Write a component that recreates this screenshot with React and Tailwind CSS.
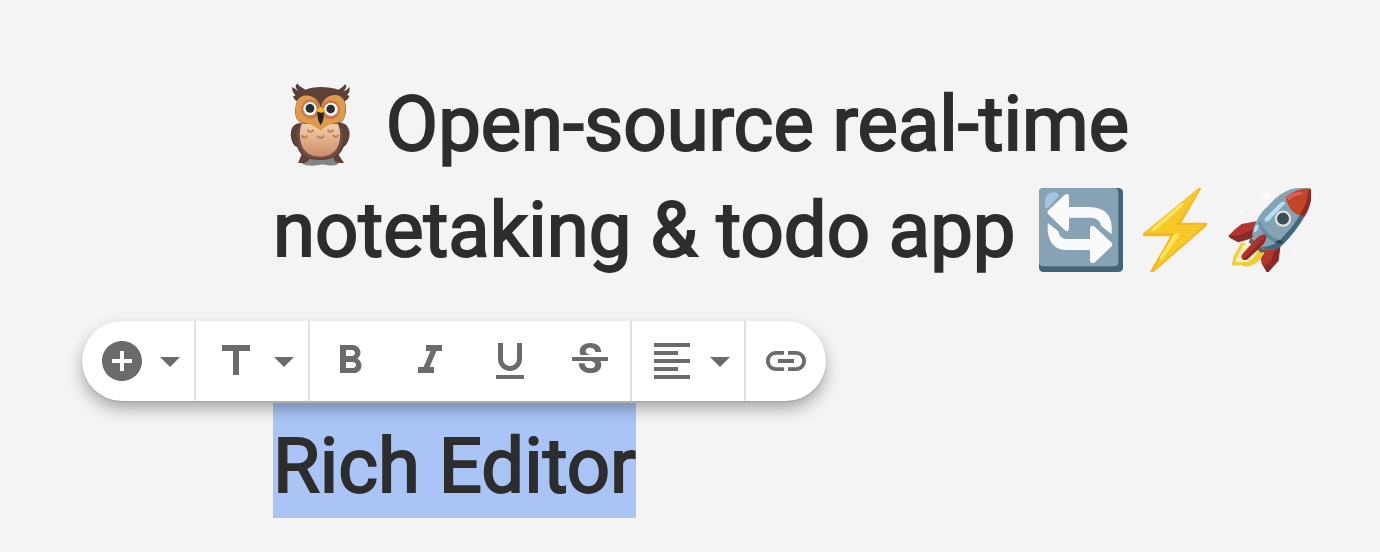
import {
  MdAddCircle,
  MdArrowDropDown,
  MdTitle,
  MdFormatBold,
  MdFormatItalic,
  MdFormatUnderlined,
  MdStrikethroughS,
  MdFormatAlignLeft,
  MdLink,
} from "react-icons/md";

function Emoji({ label, viewBox, children }) {
  return (
    <svg
      role="img"
      aria-label={label}
      viewBox={viewBox}
      className="mx-[5px] inline-block size-[84px] align-[-16px]"
    >
      {children}
    </svg>
  );
}

function Owl() {
  return (
    <Emoji label="Owl" viewBox="24 36 252 252">
      <defs>
        <linearGradient id="owl-belly" x1="0" y1="0" x2="0" y2="1">
          <stop offset="0.15" stopColor="#ebcba5" />
          <stop offset="1" stopColor="#ce8b68" />
        </linearGradient>
      </defs>
      <path d="M96 281q4-20 28-24h58q22 4 24 24-14 8-32 5-12-4-24-2-34 8-54-3z" fill="#848484" />
      <path d="M98 246 84 279h20q14-6 18-20zM186 256l10 20q12 4 26 2l-24-34z" fill="#5d4037" />
      <path d="M84 160q-22 6-22 34 2 30 20 38 6 18 18 26 20 12 50 12t50-12q14-8 20-26 18-12 19-42-2-26-22-31z" fill="#5d4037" />
      <path d="M90 166q-10 12-9 32 1 26 9 40 10 18 24 24 36 8 74 0 14-6 22-24 9-16 9-40 0-22-11-32z" fill="#704d42" />
      <path d="M96 160q-8 18-6 44 6 56 62 56 54-2 58-58 2-24-8-44z" fill="url(#owl-belly)" />
      <path d="M83 40q-14 10 3 23-10-6-19-12-3 14 10 25l-8 3q4 12 12 14-10 30-2 52 8 14 24 16h98q16-2 22-18 10-20 1-50 12-4 14-16l-7-2q10-8 8-24-8 10-18 12 14-14 4-20-6 10-20 16-22-8-54-8-26 0-44 8-20-10-24-17z" fill="#5d4037" />
      <path d="M152 114C144 72 92 66 81 94c-7 24-5 46 1 55 8 12 24 7 36 13 14 6 24 12 34 20 10-10 20-16 34-21 12-4 28-1 35-13 7-14 8-38 1-56-12-28-62-22-70 22z" fill="#e09a4c" />
      <circle cx="122" cy="117" r="29" fill="#c77a4b" />
      <circle cx="181" cy="119" r="29" fill="#c77a4b" />
      <circle cx="120" cy="116" r="20" fill="#fafafa" />
      <circle cx="183" cy="118" r="20" fill="#fafafa" />
      <circle cx="120" cy="115" r="13" fill="#2b2f30" />
      <circle cx="182" cy="117" r="13" fill="#2b2f30" />
      <path d="M142 125q9-5 19 0 3 22-9 41-11-18-10-41z" fill="#252525" />
      <path d="M141 124q4-12 11-12 8 1 11 13-11 7-22-1z" fill="#fcb803" />
      <g fill="none" stroke="#c57b57" strokeWidth="6" strokeLinecap="round">
        <path d="M114 181q2 4 7 4 5 1 8-4M174 181q2 4 7 4 5 1 8-4M96 198q2 4 7 4 5 1 8-4M143 199q4 5 9 5 6 0 9-5M191 197q2 4 7 4 4 0 6-4" />
      </g>
    </Emoji>
  );
}

function Refresh() {
  return (
    <Emoji label="Sync" viewBox="27 39 252 252">
      <rect x="27" y="39" width="252" height="252" rx="13" fill="#436476" />
      <path d="M40 39h212q13 0 13 13v210q0 12-13 12H40q-13 0-13-12V52q0-13 13-13z" fill="#87a2b5" />
      <path d="M45 96V78q2-22 22-26 18-2 20 12-16 14-30 32-8 8-12 0z" fill="#a1c6da" />
      <g fill="#fafafa">
        <path d="M54 107 104 59q13-6 13 5v32h61q64 2 67 58v24l-32-26q-4-22-30-24h-66v35q-3 10-13 2L54 117q-4-5 0-10z" />
        <path d="M245 214 195 262q-13 6-15-4v-33h-76q-46-4-51-60v-22l32 26q2 20 22 23h73v-34q4-10 14-3l51 48q4 5 0 11z" />
      </g>
    </Emoji>
  );
}

function Bolt() {
  return (
    <Emoji label="High voltage" viewBox="9 39 252 252">
      <path d="M205 40q6-3 8 2l-59 101h73q8 2 3 9L70 292q-8 4-10-2l61-106H43q-7-3-3-9z" fill="#f9b517" />
      <path d="M204 43 137 146q2 3 8 3h80L72 284l61-107q-2-3-8-3H46z" fill="#f6c92a" />
      <path d="M67 159 153 85q8-4 8 2-1 4-6 9l-78 70q-8 4-11 0-2-4 1-7zM91 243l38-61q12-12 18-5 1 6-4 12l-43 60q-7 6-10 2-2-4 1-8z" fill="#fce45b" />
      <path d="M200 48 141 134q-6 9 0 12l10-8 61-95z" fill="#f7c329" />
    </Emoji>
  );
}

function Rocket() {
  return (
    <Emoji label="Rocket" viewBox="289 39 252 252">
      <path d="m407 48 4 9 10 1-7 7 2 10-9-5-9 5 2-10-7-7 10-1z" fill="#fff" />
      <g fill="#fff">
        <circle cx="330" cy="112" r="5" />
        <circle cx="376" cy="108" r="3" />
        <circle cx="521" cy="170" r="4" />
        <circle cx="492" cy="226" r="5" />
      </g>
      <path d="m382 138-49 9q-18 12-38 34-3 4 2 7l26 14q22-6 46-14z" fill="#b33430" />
      <path d="m297 187 24 14q24-6 44-14l8-24q-26 6-44 17-18 4-34 1z" fill="#8b2926" />
      <path d="m386 225 7 41 15 25q3 3 6 0l30-34 6-48-20-5z" fill="#b33430" />
      <path d="m449 212-7 44-29 34q-4 3-6-1l-8-17q20-8 24-18 3-20 18-38z" fill="#8b2926" />
      <path d="m332 202-23 42-6 26q10 4 26-1 10 8 28 5 32-10 44-42z" fill="#ecce3c" />
      <path d="m338 209-18 36-6 15 23 2q24 2 42-29l-24-24z" fill="#fbf0b2" />
      <path d="m360 188-6 14 39 33 14-12z" fill="#616161" />
      <path d="M541 42q6 46-21 87-26 44-64 80-22 18-48 15-16-1-29-16-18-16-13-37 10-48 49-81 32-36 65-47 36-9 61-1z" fill="#86a3b6" />
      <path d="m508 118 13 5q-25 45-65 86-22 18-48 15l-17-8q46-1 70-35 30-30 47-63z" fill="#456878" />
      <path d="M465 66q33-25 70-26l6 2q6 38-20 82-46-5-56-58z" fill="#c44525" />
      <path d="M533 48q3-3 8-6 5 44-20 82l-13-6q23-32 25-70z" fill="#8a2926" />
      <path d="M467 66q22-16 46-15 6 3-2 8-18 2-35 15-7 3-9-8z" fill="#dd615b" />
      <path d="M388 136q10 42 65 62l-8 9q-47-14-61-61z" fill="#668b9e" />
      <path d="m431 202 14-8 12 5-9 8z" fill="#2f4650" />
      <path d="m403 129 46-45q12-8 15 1l-49 52q-9 5-12 1-2-4 0-9zM370 162q6-18 14-10-3 13-9 19-7 3-5-9z" fill="#b3e1f4" />
      <circle cx="457" cy="131" r="21" fill="#35444d" stroke="#e2e2e2" strokeWidth="7" />
      <circle cx="457" cy="131" r="17" fill="#3d4d56" />
      <path d="M406 180q2 14-8 27l-47 45q-10 6-17-1-4-7 2-15l40-44q16-17 30-12z" fill="#b0302e" />
      <path d="M407 181q1 14-9 27l-47 44q-8 5-15 1 30-20 45-44 16-11 26-28z" fill="#8b2926" />
    </Emoji>
  );
}

const textStyles = [
  { label: "Bold", Icon: MdFormatBold },
  { label: "Italic", Icon: MdFormatItalic },
  { label: "Underline", Icon: MdFormatUnderlined },
  { label: "Strikethrough", Icon: MdStrikethroughS },
];

function MenuButton({ label, Icon }) {
  return (
    <button
      type="button"
      aria-label={label}
      aria-haspopup="menu"
      className="flex h-full items-center border-r-2 border-[#e0e0e0] pl-4"
    >
      <Icon className="size-12" />
      <MdArrowDropDown className="size-12" />
    </button>
  );
}

function ToolButton({ label, Icon }) {
  return (
    <button type="button" aria-label={label} className="flex h-full w-20 items-center justify-center">
      <Icon className="size-12" />
    </button>
  );
}

function Toolbar() {
  return (
    <div
      role="toolbar"
      aria-label="Formatting"
      className="relative z-10 flex h-20 w-fit items-center rounded-full bg-white text-[#6b6b6b] shadow-[0_1px_2px_rgba(0,0,0,0.12),0_8px_16px_rgba(0,0,0,0.3)]"
    >
      <MenuButton label="Insert" Icon={MdAddCircle} />
      <MenuButton label="Text style" Icon={MdTitle} />
      <div className="flex h-full border-r-2 border-[#e0e0e0]">
        {textStyles.map((style) => (
          <ToolButton key={style.label} {...style} />
        ))}
      </div>
      <MenuButton label="Alignment" Icon={MdFormatAlignLeft} />
      <ToolButton label="Link" Icon={MdLink} />
    </div>
  );
}

export default function App() {
  return (
    <main className="min-h-screen bg-[#f4f4f4] pt-[71px] pr-12 pb-8 pl-[82px] font-['Roboto',sans-serif] text-[76px] leading-[106px] text-[#2d2d2d] [-webkit-text-stroke:2px_#2d2d2d]">
      <h1 className="pl-[191px] font-normal">
        <Owl /> Open-source real-time notetaking &amp; todo app{" "}
        <span className="whitespace-nowrap">
          <Refresh />
          <Bolt />
          <Rocket />
        </span>
      </h1>
      <div className="mt-[38px]">
        <Toolbar />
      </div>
      <h2 className="mt-[2px] ml-[191px] w-fit bg-[#a9c4f5] pt-[11px] leading-[104px] font-normal">Rich Editor</h2>
    </main>
  );
}
